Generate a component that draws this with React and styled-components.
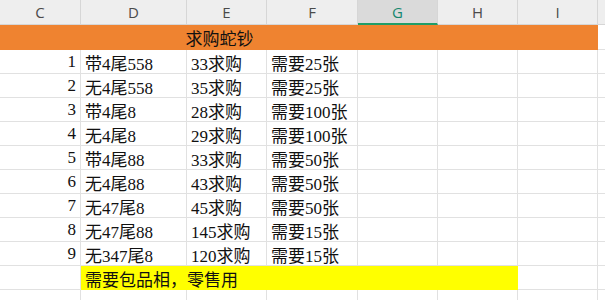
import React from "react";
import styled, { createGlobalStyle } from "styled-components";

const GlobalStyle = createGlobalStyle`
    * {
        box-sizing: border-box;
    }
    body {
        margin: 0;
        background: #fff;
    }
`;

const COLS = ["C", "D", "E", "F", "G", "H", "I", ""];
const SELECTED = "G";

const rows = [
    ["1", "带4尾558", "33求购", "需要25张"],
    ["2", "无4尾558", "35求购", "需要25张"],
    ["3", "带4尾8", "28求购", "需要100张"],
    ["4", "无4尾8", "29求购", "需要100张"],
    ["5", "带4尾88", "33求购", "需要50张"],
    ["6", "无4尾88", "43求购", "需要50张"],
    ["7", "无47尾8", "45求购", "需要50张"],
    ["8", "无47尾88", "145求购", "需要15张"],
    ["9", "无347尾8", "120求购", "需要15张"],
];

const Sheet = () => {
    return (
        <Frame>
            <GlobalStyle />
            <Grid>
                {COLS.map((c, i) => (
                    <HeadCell key={"h" + i} $selected={c === SELECTED}>
                        {c}
                    </HeadCell>
                ))}

                <Cell $fill="#ef8330" $plain />
                <Cell $fill="#ef8330" $plain $span={3} $align="center">
                    求购蛇钞
                </Cell>
                <Cell $fill="#ef8330" $plain $span={3} />
                <Cell />

                {rows.map((r, i) => (
                    <React.Fragment key={"r" + i}>
                        <Cell $align="right">{r[0]}</Cell>
                        <Cell>{r[1]}</Cell>
                        <Cell>{r[2]}</Cell>
                        <Cell>{r[3]}</Cell>
                        <Cell />
                        <Cell />
                        <Cell />
                        <Cell />
                    </React.Fragment>
                ))}

                <Cell />
                <Cell $fill="#ffff00" $plain $span={5}>
                    需要包品相，零售用
                </Cell>
                <Cell />
                <Cell />

                {COLS.map((c, i) => (
                    <Cell key={"e" + i} />
                ))}
            </Grid>
        </Frame>
    );
};

const Frame = styled.div`
    width: 605px;
    height: 300px;
    overflow: hidden;
    background: #fff;
`;

const Grid = styled.div`
    display: grid;
    grid-template-columns: 81px 106px 80px 91px 80px 80px 80px 40px;
    grid-template-rows: 25px 25px repeat(11, 24px);
    width: 638px;
`;

const HeadCell = styled.div`
    display: flex;
    align-items: center;
    justify-content: center;
    background: ${(p) => (p.$selected ? "#dadada" : "#eeeeee")};
    color: ${(p) => (p.$selected ? "#15876e" : "#4a4a4a")};
    border-right: 1px solid #d6d6d6;
    border-bottom: ${(p) => (p.$selected ? "2px solid #1f9d68" : "1px solid #d6d6d6")};
    font-family: "Open Sans", "Noto Sans", sans-serif;
    font-size: 15px;
    padding-top: ${(p) => (p.$selected ? "1px" : "0")};
`;

const Cell = styled.div`
    grid-column: span ${(p) => p.$span || 1};
    display: flex;
    align-items: center;
    justify-content: ${(p) =>
        p.$align === "right" ? "flex-end" : p.$align === "center" ? "center" : "flex-start"};
    padding: 1px 4px 0 4px;
    background: ${(p) => p.$fill || "#fff"};
    border-right: ${(p) => (p.$plain ? "none" : "1px solid #e1e1e1")};
    border-bottom: 1px solid ${(p) => (p.$plain ? p.$fill : "#e1e1e1")};
    font-family: "Liberation Serif", "Noto Sans CJK SC", serif;
    font-size: 17px;
    color: #111;
    white-space: nowrap;
    overflow: hidden;
`;

export default Sheet;
